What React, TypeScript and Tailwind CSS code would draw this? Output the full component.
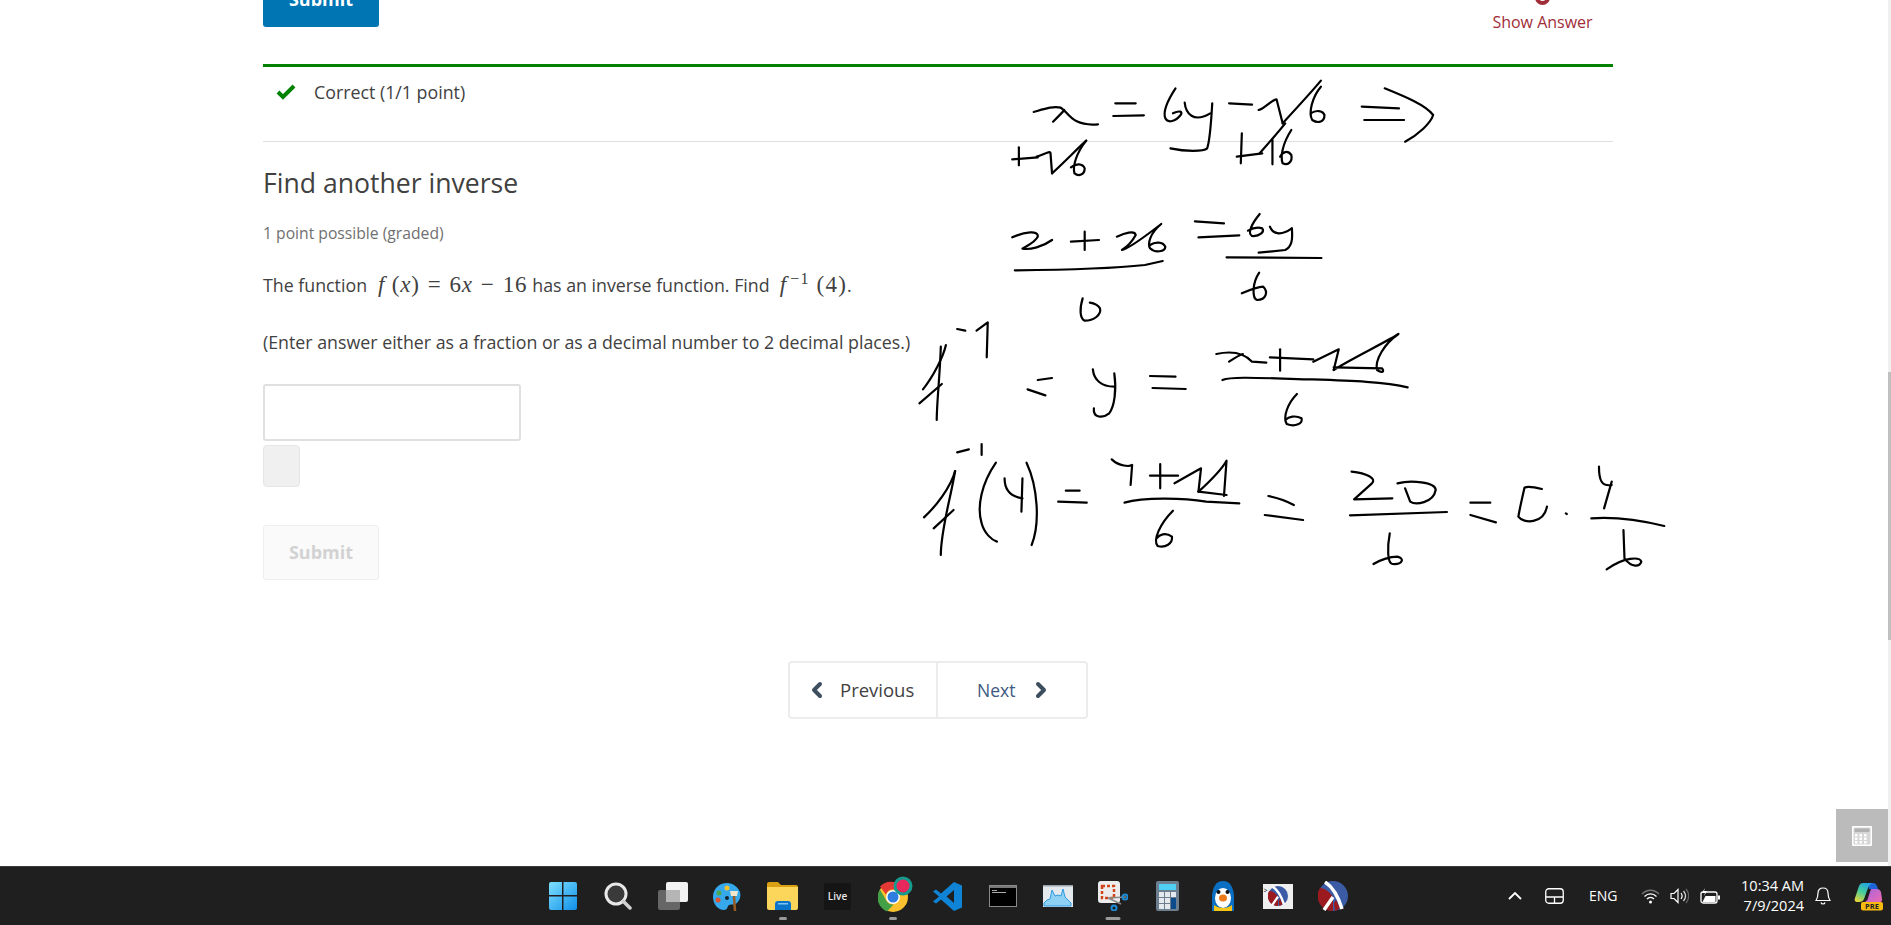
import React from 'react';
import { ChevronLeft, ChevronRight } from 'lucide-react';

const sans = 'font-["Open_Sans","Liberation_Sans",sans-serif]';
const math = 'font-["Liberation_Serif",serif]';

// pen annotations, coordinates taken from two crops of the page
const inkTop = [
  'M262 156 C285 146 300 138 315 143 C330 155 335 200 388 193',
  'M300 185 C310 170 318 158 322 150',
  'M422 130 L462 130',
  'M418 168 L478 166',
  'M540 85 C525 120 515 155 520 175 C525 190 540 185 550 165 C555 155 548 150 535 160',
  'M558 128 C560 160 575 190 608 160',
  'M612 130 C610 180 608 240 602 265 C595 275 560 275 530 265',
  'M645 130 L690 134',
  'M703 150 C715 145 730 118 738 118 L750 190',
  'M750 190 C780 140 810 90 825 62',
  'M825 80 C808 110 800 160 808 180 C820 192 832 185 832 165 C828 150 815 150 805 160',
  'M905 140 L978 145',
  'M910 180 L988 180',
  'M950 85 C990 110 1030 135 1045 165 C1040 190 1015 225 990 245',
  'M220 298 L270 292',
  'M233 262 L233 316',
  'M268 290 C280 285 295 270 295 280 L298 340',
  'M298 340 C320 310 345 270 365 242',
  'M365 242 C345 280 338 320 342 340 C350 350 362 345 362 325 C358 310 345 310 335 322',
  'M660 290 L710 280',
  'M670 220 L668 310',
  'M705 280 C725 245 745 210 755 190',
  'M730 240 L730 313',
  'M767 210 C750 250 745 290 750 310 C760 318 770 305 767 285 C760 270 750 275 745 290',
  'M220 532 C245 515 272 510 270 530 C265 548 245 560 240 566 C255 570 280 560 298 540',
  'M335 545 L390 540',
  'M362 515 L362 570',
  'M425 530 C440 520 460 510 462 525 C455 545 445 560 435 570 C450 565 480 530 512 492 C490 520 485 550 490 565 C500 580 520 575 520 560 C515 545 500 545 490 555',
  'M225 631 C300 630 420 625 480 615 L515 603',
  'M578 484 L635 490',
  'M585 532 L665 526',
  'M705 462 C690 490 680 520 690 528 C705 530 715 515 710 505 C700 500 690 505 682 512',
  'M725 500 C730 520 745 530 768 505',
  'M768 505 C770 540 768 560 755 570 L703 578',
  'M640 592 L826 594',
  'M670 700 C685 690 700 680 712 680 C722 695 718 720 700 720 C690 715 690 670 704 638',
  'M358 715 C352 745 352 775 362 782 C380 782 395 765 392 745 C388 735 380 730 372 728',
];

const inkBottom = [
  'M90 105 C85 140 65 200 45 238',
  'M80 110 C78 200 72 280 72 330',
  'M38 280 L82 222',
  'M112 57 L128 62',
  'M150 62 L172 37 L170 142',
  'M270 210 L298 204',
  'M250 238 L285 256',
  'M378 178 C380 210 395 230 420 230',
  'M420 190 C425 240 420 290 410 310 C398 325 378 325 380 295',
  'M490 198 L540 200',
  'M495 234 L560 237',
  'M620 132 C650 122 675 130 690 155 L718 158',
  'M645 155 C655 145 665 135 672 132',
  'M725 142 L810 148',
  'M745 118 L745 182',
  'M810 155 L860 118 L850 180',
  'M850 180 C880 150 960 90 977 72 C950 100 930 150 935 180 C945 190 950 185 945 175 L850 172',
  'M632 210 C650 198 720 205 800 208 C880 212 950 215 995 232',
  'M778 252 C760 280 750 320 758 342 C775 352 790 340 787 325 C775 315 762 320 755 330',
  'M108 483 C100 530 70 590 47 622',
  'M108 483 C100 560 80 660 80 735',
  'M66 655 L105 600',
  'M112 427 L135 418',
  'M160 402 L160 435',
  'M188 458 C160 520 150 590 160 640 C165 670 180 690 190 695',
  'M205 505 C205 540 215 560 240 565',
  'M240 505 L238 605',
  'M248 458 C270 530 275 640 258 705',
  'M325 542 L352 542',
  'M310 575 L366 578',
  'M415 448 C430 470 450 470 455 465 L452 525',
  'M490 497 L545 497',
  'M510 462 L510 535',
  'M538 520 L590 475 L585 545',
  'M585 545 L640 555',
  'M585 545 C610 510 630 480 640 452 L635 558',
  'M440 578 C480 560 560 565 600 575 L665 580',
  'M535 602 C510 640 495 690 505 708 C520 715 535 700 533 680 C520 665 508 675 503 685',
  'M722 558 C745 565 760 575 772 585',
  'M715 615 L790 630',
  'M885 485 C915 490 935 505 925 520 L890 568 L965 565',
  'M975 520 C1000 510 1050 515 1050 540 C1045 580 1010 585 1000 575 L990 535',
  'M882 616 L1072 606',
  'M960 670 C955 710 955 760 965 762 C985 765 990 745 975 740 C960 740 940 750 928 762',
  'M1118 578 L1157 578',
  'M1118 615 L1168 637',
  'M1258 537 C1240 530 1230 528 1224 533 C1220 560 1214 600 1212 620 C1222 642 1262 642 1268 590',
  'M1305 610 L1307 612',
  'M1370 470 C1370 510 1375 530 1395 525',
  'M1395 515 L1380 595',
  'M1355 625 C1400 620 1450 630 1498 648',
  'M1418 660 L1420 745 C1435 775 1450 770 1453 755 C1450 740 1420 740 1385 778',
];

const Ink: React.FC = () => (
  <svg className="absolute left-0 top-0 pointer-events-none" width="1880" height="866" fill="none" stroke="#000" strokeWidth="2.200" strokeLinecap="round" strokeLinejoin="round">
    <g transform="translate(900 60) scale(0.5102 0.33333)">
      {inkTop.map((d, i) => <path key={i} d={d} vectorEffect="non-scaling-stroke" />)}
    </g>
    <g transform="translate(900 310) scale(0.5102 0.33333)">
      {inkBottom.map((d, i) => <path key={i} d={d} vectorEffect="non-scaling-stroke" />)}
    </g>
  </svg>
);

const WinIcon = () => (
  <svg width="30" height="30" viewBox="0 0 30 30">
    <defs>
      <linearGradient id="win" x1="0" y1="0" x2="1" y2="1">
        <stop offset="0" stopColor="#7fe0ff" />
        <stop offset="1" stopColor="#0f8fe8" />
      </linearGradient>
    </defs>
    <path fill="url(#win)" d="M1 3a2 2 0 0 1 2-2h11v13H1zM15.500 1H27a2 2 0 0 1 2 2v11H15.500zM1 15.500h13V29H3a2 2 0 0 1-2-2zM15.500 15.500H29V27a2 2 0 0 1-2 2H15.500z" />
  </svg>
);

const SearchIcon = () => (
  <svg width="28" height="28" viewBox="0 0 28 28" fill="none">
    <circle cx="12" cy="12" r="10" stroke="#e8e8e8" strokeWidth="3" fill="#3a3a3a" />
    <path d="M19 19l7 7" stroke="#d0d0d0" strokeWidth="3.500" strokeLinecap="round" />
  </svg>
);

const TaskViewIcon = () => (
  <svg width="30" height="28" viewBox="0 0 30 28">
    <rect x="0" y="8" width="22" height="20" rx="2" fill="#666" />
    <rect x="8" y="0" width="22" height="20" rx="2" fill="#f2f2f2" />
    <rect x="8" y="8" width="14" height="12" fill="#b5b5b5" />
  </svg>
);

const PaletteIcon = () => (
  <svg width="29" height="29" viewBox="0 0 29 29">
    <path fill="#35a9ec" d="M14 1C6 1 0 7 0 15c0 7 5 13 11 13 4 0 3-4 5-5 3-1 6 0 8-2 3-3 4-7 3-11C25 5 20 1 14 1z" />
    <circle cx="6" cy="11" r="2.500" fill="#4aa84a" />
    <circle cx="14" cy="6" r="2.500" fill="#f2c12e" />
    <circle cx="5" cy="18" r="2.500" fill="#e0552f" />
    <circle cx="14" cy="16" r="2" fill="#123" />
    <path d="M21 14l1 15" stroke="#9a5b20" strokeWidth="2.500" />
    <path d="M17 9h8l-1 5h-6z" fill="#f3e6cf" />
  </svg>
);

const FolderIcon = () => (
  <svg width="31" height="28" viewBox="0 0 31 28">
    <path fill="#d9a013" d="M0 2a2 2 0 0 1 2-2h9l3 3h15a2 2 0 0 1 2 2v4H0z" />
    <path fill="#fbd65b" d="M0 5h31v21a2 2 0 0 1-2 2H2a2 2 0 0 1-2-2z" />
    <path fill="#0a74c9" d="M8 22a3 3 0 0 1 3-3h10a3 3 0 0 1 3 3v6H8z" />
    <rect x="11" y="21" width="10" height="1.500" fill="#7cc4f2" />
  </svg>
);

const LiveIcon = () => (
  <div className={`w-[27px] h-[27px] rounded-[2px] bg-[#151515] flex items-center justify-center text-[10px] font-semibold leading-none text-[#e8e8e8] ${sans}`}>Live</div>
);

const ChromeIcon = () => (
  <svg width="36" height="36" viewBox="0 0 36 36" className="-mt-[4px] ml-[6px]">
    <circle cx="15" cy="21" r="15" fill="#fbc02d" />
    <path fill="#e53935" d="M15 6a15 15 0 0 1 13 7.500H15a7.500 7.500 0 0 0-7 5L2 10.500A15 15 0 0 1 15 6z" />
    <path fill="#43a047" d="M2 13.500l6.500 11.500a7.500 7.500 0 0 0 7 3.500L9 35.500A15 15 0 0 1 2 13.500z" />
    <circle cx="15" cy="21" r="7" fill="#fff" />
    <circle cx="15" cy="21" r="5.500" fill="#2f7de1" />
    <circle cx="25" cy="10" r="8" fill="#e8275c" stroke="#169a8e" strokeWidth="3" />
  </svg>
);

const VsCodeIcon = () => (
  <svg width="29" height="29" viewBox="0 0 29 29">
    <path fill="#0f83d6" d="M21 0l8 3.500v22L21 29 8 17.500l-5 4L0 19.500 6 14.500 0 9.500l3-2 5 4zM21 8l-7.500 6.500L21 21z" />
  </svg>
);

const TerminalIcon = () => (
  <div className="w-[28px] h-[22px] border border-[#8a8a8a] bg-black flex flex-col">
    <div className="h-[2px] bg-[#777]" />
    <div className="w-[5px] h-[1px] bg-[#aaa] mt-[2px] ml-[2px]" />
    <div className="w-[14px] h-[1px] bg-[#aaa] mt-[1px] ml-[2px]" />
  </div>
);

const MonitorIcon = () => (
  <svg width="30" height="22" viewBox="0 0 30 22">
    <rect width="30" height="22" fill="#e4e9ee" />
    <rect width="30" height="1.500" fill="#9aa4ad" />
    <path fill="#8fd0f5" stroke="#2f9be0" strokeWidth="1" d="M1 18l3-3 3-1 2-9 3 6 3-1 3 1 2-7 2 8 3 3 3 3v3H1z" />
  </svg>
);

const SnipIcon = () => (
  <svg width="30" height="30" viewBox="0 0 30 30" fill="none">
    <rect x="0" y="0" width="22" height="22" rx="3" fill="#ececec" />
    <rect x="4" y="5" width="12" height="12" stroke="#d3431a" strokeWidth="2.500" strokeDasharray="3 2" />
    <path d="M10 17l18-1M10 17l13 6" stroke="#8a8a8a" strokeWidth="1.500" />
    <circle cx="27" cy="16" r="2.500" stroke="#1c8bd8" strokeWidth="2" />
    <circle cx="16" cy="27" r="2.500" stroke="#1c8bd8" strokeWidth="2" />
  </svg>
);

const CalcIcon = () => (
  <svg width="23" height="30" viewBox="0 0 23 30">
    <rect width="23" height="30" rx="2" fill="#6d7f8e" />
    <rect x="3" y="3" width="17" height="6" fill="#4fd0f5" />
    {[0, 1, 2].map((r) => [0, 1].map((c) => (
      <rect key={`${r}${c}`} x={3 + c * 6} y={11 + r * 6} width="5" height="5" fill="#e4e9ee" />
    )))}
    <rect x="15" y="11" width="5" height="5" fill="#e4e9ee" />
    <rect x="15" y="17" width="5" height="11" fill="#0d4c8c" />
  </svg>
);

const PenguinIcon = () => (
  <svg width="22" height="30" viewBox="0 0 22 30">
    <path fill="#0a6fc2" d="M11 0c7 0 10 6 11 14v16H0V14C1 6 4 0 11 0z" />
    <ellipse cx="11" cy="17" rx="8" ry="10" fill="#fff" />
    <path fill="#f5c518" d="M2 24c5 4 13 4 18 0v6H2z" />
    <circle cx="6.500" cy="11" r="2" fill="#111" />
    <circle cx="15.500" cy="11" r="2" fill="#111" />
    <ellipse cx="11" cy="17" rx="4" ry="3.500" fill="#ee7b1a" />
  </svg>
);

const RacketMark = ({ size }: { size: number }) => (
  <svg width={size} height={size} viewBox="0 0 30 30">
    <circle cx="15" cy="15" r="15" fill="#3b5ba5" />
    <path fill="#9a1a1f" d="M15 30A15 15 0 0 1 2 7c5 0 10 4 13 9zM22 27a15 15 0 0 1-5 3l-1-8 2-3z" />
    <path d="M7 1c8 5 14 17 17 27M15 16L6 29" stroke="#fff" strokeWidth="3.500" fill="none" />
  </svg>
);

const RacketWindow = () => (
  <div className="relative w-[30px] h-[25px] bg-[#efefef] flex items-center justify-center">
    <span className="absolute left-[1px] top-[3px] text-[7px] leading-none text-black">&gt;</span>
    <RacketMark size={20} />
  </div>
);

const taskbarApps: { el: React.ReactNode; dot?: string }[] = [
  { el: <WinIcon /> },
  { el: <SearchIcon /> },
  { el: <TaskViewIcon /> },
  { el: <PaletteIcon /> },
  { el: <FolderIcon />, dot: 'w-2' },
  { el: <LiveIcon /> },
  { el: <ChromeIcon />, dot: 'w-2' },
  { el: <VsCodeIcon /> },
  { el: <TerminalIcon /> },
  { el: <MonitorIcon /> },
  { el: <SnipIcon />, dot: 'w-[15px]' },
  { el: <CalcIcon /> },
  { el: <PenguinIcon /> },
  { el: <RacketWindow /> },
  { el: <RacketMark size={30} /> },
];

const Tray: React.FC = () => (
  <div className={`flex items-center text-white font-["Open_Sans",sans-serif] pr-[8px]`}>
    <svg width="14" height="8" viewBox="0 0 14 8" fill="none" className="mr-[23px]"><path d="M1 7l6-6 6 6" stroke="#fff" strokeWidth="1.800" /></svg>
    <svg width="19" height="16" viewBox="0 0 19 16" fill="none" className="mr-[25px]"><rect x=".75" y=".75" width="17.500" height="14.500" rx="3" stroke="#fff" strokeWidth="1.300" /><path d="M1 9h17M9.500 9v6" stroke="#fff" strokeWidth="1.300" /></svg>
    <span className="text-[14px] w-[28px] mr-[24px] leading-none">ENG</span>
    <svg width="19" height="15" viewBox="0 0 19 15" fill="none" className="mr-[10px]">
      <path d="M1 5c5-5 12-5 17 0" stroke="#777" strokeWidth="1.300" />
      <path d="M3.500 7.500c3.500-3.500 8.500-3.500 12 0M6 10c2-2 5-2 7 0" stroke="#fff" strokeWidth="1.300" />
      <circle cx="9.500" cy="13" r="1.500" fill="#fff" />
    </svg>
    <svg width="19" height="16" viewBox="0 0 19 16" fill="none" className="mr-[11px]">
      <path d="M1 5.500h3l4-4v13l-4-4H1z" stroke="#fff" strokeWidth="1.200" />
      <path d="M11 5c1.500 2 1.500 4 0 6" stroke="#fff" strokeWidth="1.200" />
      <path d="M13.500 3c2.500 3 2.500 7 0 10" stroke="#ddd" strokeWidth="1.200" />
      <path d="M16 1c3.500 4 3.500 10 0 14" stroke="#666" strokeWidth="1.200" />
    </svg>
    <svg width="20" height="17" viewBox="0 0 20 17" className="mr-[20px]">
      <rect x="1" y="4" width="16" height="11" rx="2" fill="none" stroke="#fff" strokeWidth="1.300" />
      <path d="M2.500 14l3-6h10v6z" fill="#fff" />
      <rect x="18" y="7.500" width="2" height="4" fill="#fff" />
      <path d="M5 0L2 5h3l-1 3 3-5H4z" fill="#fff" />
    </svg>
    <div className="flex flex-col items-end text-[14.500px] leading-[20px] w-[64px]">
      <span className="whitespace-nowrap">10:34 AM</span>
      <span className="whitespace-nowrap">7/9/2024</span>
    </div>
    <svg width="16" height="18" viewBox="0 0 16 18" fill="none" className="ml-[11px] mr-[23px]"><path d="M8 1c3 0 5 2 5 5 0 4 1 6 2 7.500H1C2 12 3 10 3 6c0-3 2-5 5-5zM6 15.500c.5 2 3.500 2 4 0" stroke="#fff" strokeWidth="1.200" /></svg>
    <svg width="29" height="29" viewBox="0 0 29 29">
      <defs>
        <linearGradient id="cp1" x1="0.700" y1="0" x2="0.200" y2="1"><stop offset="0" stopColor="#1f9fe8" /><stop offset=".5" stopColor="#45cf9a" /><stop offset="1" stopColor="#e9d53a" /></linearGradient>
        <linearGradient id="cp2" x1="0" y1="0" x2="1" y2="1"><stop offset="0" stopColor="#a765e0" /><stop offset="1" stopColor="#ee6ab0" /></linearGradient>
      </defs>
      <path fill="#1f63d8" d="M14 1h5c2 0 3 1 4 3l1 3h-9z" />
      <path fill="url(#cp2)" d="M17 7h6c2 0 3 1 4 3l1 7c0 3-1 3-3 3H11c2-1 3-3 3-4z" />
      <path fill="url(#cp1)" d="M9 1h11c-3 0-5 2-6 5L10 17c-1 2-2 3-5 3H3c-2 0-3-2-2-4L5 4C6 2 7 1 9 1z" />
      <rect x="7" y="20" width="22" height="8.500" rx="2" fill="#f5b90f" />
      <text x="18" y="27" textAnchor="middle" fontSize="7.500" fontWeight="700" fontFamily="Open Sans" fill="#222">PRE</text>
    </svg>
  </div>
);

export default function App() {
  return (
    <div className={`relative h-[925px] w-full overflow-hidden flex flex-col bg-white text-[#414141] ${sans}`}>
      <main className="flex-1 pl-[263px] pr-[278px]">
        {/* previous problem, cut off by the scroll position */}
        <div className="flex justify-between h-[64px]">
          <div className="w-[116px] h-[55px] -mt-[28px] rounded-[3px] bg-[#0075b4] text-white font-bold text-[18px] flex items-center justify-center">Submit</div>
          <div className="flex flex-col items-center w-[101px] mr-[20px]">
            <div className="w-[15px] h-[15px] -mt-[10px] rounded-full border-[4px] border-[#a02c38]" />
            <span className="text-[16px] leading-[20px] mt-[7px] text-[#a02c38] whitespace-nowrap">Show Answer</span>
          </div>
        </div>

        <div className="border-t-[3px] border-[#008100] h-[61px] flex items-start pt-[13px] border-b border-b-[#dddddd] box-content">
          <svg width="20" height="16" viewBox="0 0 20 16" className="ml-[13px] mt-[4px]"><path d="M2 8l5 5L18 2" fill="none" stroke="#008100" strokeWidth="4" /></svg>
          <span className="ml-[18px] text-[17.800px] leading-[24px]">Correct (1/1 point)</span>
        </div>

        <h2 className="text-[26.600px] leading-[34px] mt-[24px]">Find another inverse</h2>
        <p className="text-[15.700px] leading-[20px] mt-[23px] text-[#707070]">1 point possible (graded)</p>
        <p className="text-[17.800px] leading-[26px] mt-[29px] flex items-baseline whitespace-nowrap">
          <span>The function</span>
          <span className={`${math} text-[23px] ml-[11px] mr-[5px] tracking-[0.8px]`}>
            <i>f</i> (<i>x</i>)<span className="mx-[8px]">=</span>6<i>x</i><span className="mx-[8px]">−</span>16
          </span>
          <span>has an inverse function. Find</span>
          <span className={`${math} text-[23px] ml-[10px] tracking-[1.200px]`}><i>f</i><sup className="text-[16px] ml-[3px]">−1</sup> (4)</span>
          <span>.</span>
        </p>
        <p className="text-[17.800px] leading-[24px] mt-[32px] whitespace-nowrap">(Enter answer either as a fraction or as a decimal number to 2 decimal places.)</p>

        <div className="w-[258px] h-[57px] mt-[30px] border-2 border-[#e0e0e0] rounded-[3px] bg-white" />
        <div className="w-[37px] h-[42px] mt-[4px] border border-[#e6e6e6] rounded-[4px] bg-[#f0f0f0]" />
        <div className="w-[116px] h-[55px] mt-[38px] border border-[#eeeeee] rounded-[3px] bg-[#fafafa] text-[#d2d2d2] font-bold text-[18px] flex items-center justify-center">Submit</div>

        <nav className="w-[300px] h-[58px] mt-[81px] ml-[525px] flex border-2 border-[#ececec] rounded-[4px]">
          <div className="w-[148px] flex items-center border-r-2 border-[#ececec] pl-[17px] text-[18.500px] text-[#414141]">
            <ChevronLeft size={24} strokeWidth={4} className="text-[#3d4f5f] -ml-[2px]" />
            <span className="ml-[11px]">Previous</span>
          </div>
          <div className="flex-1 flex items-center pl-[39px] text-[17.500px] text-[#3d5a80]">
            <span>Next</span>
            <ChevronRight size={24} strokeWidth={4} className="text-[#3d4f5f] ml-[14px]" />
          </div>
        </nav>
      </main>

      <Ink />

      {/* thin page scrollbar */}
      <div className="absolute right-0 top-0 w-[3px] h-[866px] bg-[#f0f0f0]">
        <div className="w-full h-[268px] mt-[372px] bg-[#c0c0c0]" />
      </div>

      <div className="absolute right-[3px] top-[809px] w-[52px] h-[53px] bg-[#bbbbbb] flex items-center justify-center">
        <svg width="20" height="20" viewBox="0 0 20 20" className="-ml-[1px]">
          <rect width="20" height="20" rx="1" fill="#fff" />
          <rect x="1.500" y="1.500" width="17" height="17" fill="#d6d6d6" />
          <rect x="2.500" y="2.500" width="15" height="3.500" fill="#b0b0b0" />
          {[0, 1, 2].map((r) => [0, 1, 2].map((c) => (
            <rect key={`${r}${c}`} x={3 + c * 4.500} y={8 + r * 3.500} width="2.500" height="2.500" fill="#fff" />
          )))}
        </svg>
      </div>

      <footer className="h-[59px] shrink-0 bg-[#1f1f1f] border-t border-[#3a3a3a] flex items-center justify-between pl-[535px]">
        <div className="flex">
          {taskbarApps.map((app, i) => (
            <div key={i} className="relative w-[55px] h-[58px] flex items-center justify-center">
              {app.el}
              {app.dot && <div className={`absolute bottom-[5px] left-1/2 -translate-x-1/2 h-[3px] rounded-full bg-[#9a9a9a] ${app.dot}`} />}
            </div>
          ))}
        </div>
        <Tray />
      </footer>
    </div>
  );
}
